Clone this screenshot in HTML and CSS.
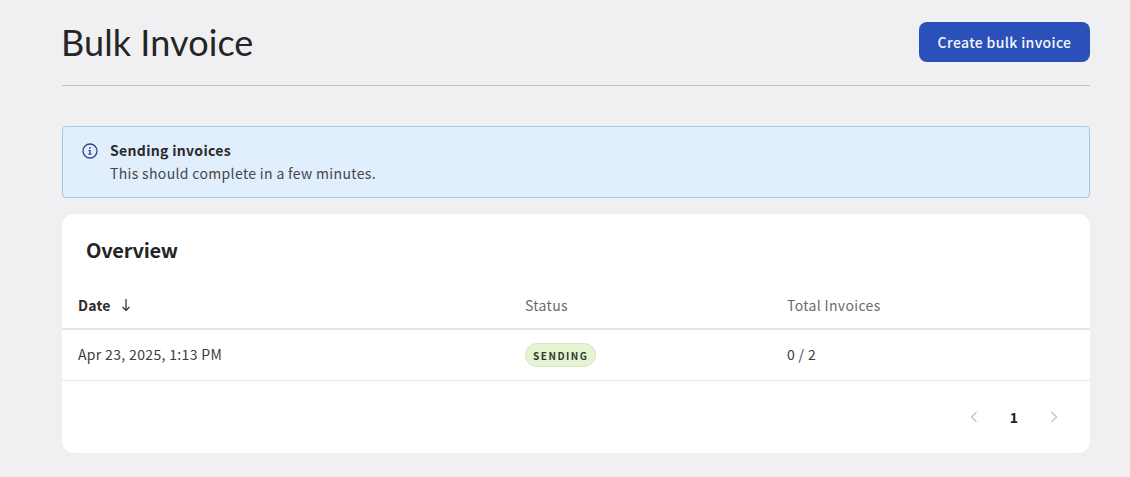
FILE: index.html
```html
<!DOCTYPE html>
<html lang="en">
<head>
<meta charset="utf-8">
<title>Bulk Invoice</title>
<link rel="stylesheet" href="styles.css">
</head>
<body>
<main class="page">
  <header class="page-header">
    <h1 class="page-title">Bulk Invoice</h1>
    <button class="primary-button" type="button">Create bulk invoice</button>
  </header>
  <section class="alert">
    <svg class="alert-icon" viewBox="0 0 16 16" width="16" height="16" aria-hidden="true">
      <circle cx="8" cy="8" r="7" fill="none" stroke="#3b3f8f" stroke-width="1.3"/>
      <rect x="7.35" y="7" width="1.3" height="4.5" fill="#3b3f8f"/>
      <rect x="6.4" y="7" width="1.6" height="1.1" fill="#3b3f8f"/>
      <rect x="6.4" y="10.6" width="3.2" height="1.1" fill="#3b3f8f"/>
      <circle cx="8" cy="4.9" r="0.9" fill="#3b3f8f"/>
    </svg>
    <div class="alert-body">
      <div class="alert-title">Sending invoices</div>
      <div class="alert-text">This should complete in a few minutes.</div>
    </div>
  </section>
  <section class="card">
    <h2 class="card-title">Overview</h2>
    <div class="table-row table-head">
      <div class="cell cell-date cell-sorted">Date
        <svg class="sort-icon" viewBox="0 0 10 14" width="10" height="14" aria-hidden="true">
          <path d="M5 1v11.5M1.5 9L5 12.5 8.5 9" fill="none" stroke="#2e2e2e" stroke-width="1.2"/>
        </svg>
      </div>
      <div class="cell cell-status">Status</div>
      <div class="cell cell-total">Total Invoices</div>
    </div>
    <div class="table-row table-body">
      <div class="cell cell-date">Apr 23, 2025, 1:13 PM</div>
      <div class="cell cell-status"><span class="badge">SENDING</span></div>
      <div class="cell cell-total">0 / 2</div>
    </div>
    <nav class="pagination">
      <svg class="page-arrow" viewBox="0 0 8 12" width="8" height="12" aria-hidden="true"><path d="M6.5 1L1.5 6l5 5" fill="none" stroke="#c4c4c4" stroke-width="1.4"/></svg>
      <span class="page-current">1</span>
      <svg class="page-arrow" viewBox="0 0 8 12" width="8" height="12" aria-hidden="true"><path d="M1.5 1l5 5-5 5" fill="none" stroke="#c4c4c4" stroke-width="1.4"/></svg>
    </nav>
  </section>
</main>
</body>
</html>
```
FILE: styles.css
```css
* { box-sizing: border-box; }
html, body { margin: 0; height: 100%; }
body {
  background: #f0f0f2;
  color: #2a2a2a;
  font-family: "Noto Sans CJK JP", "Noto Sans", sans-serif;
  font-size: 14px;
  overflow: hidden;
}
.page { padding: 0 40px 0 62px; }
.page-header {
  height: 86px;
  padding-top: 22px;
  display: flex;
  justify-content: space-between;
  align-items: flex-start;
  border-bottom: 1px solid #c0c0c2;
  margin-bottom: 40px;
}
.page-title {
  margin: 0 0 0 -1px;
  font-family: Lato, sans-serif;
  font-weight: 400;
  font-size: 36px;
  line-height: 40px;
  letter-spacing: 0.08px;
  color: #252525;
}
.primary-button {
  width: 171px;
  height: 40px;
  border: 0;
  border-radius: 8px;
  background: #2b50b9;
  color: #f7f8fc;
  font: 500 14px/20px "Noto Sans CJK JP", "Noto Sans", sans-serif;
  letter-spacing: 0.35px;
}
.alert {
  height: 72px;
  display: flex;
  gap: 12px;
  padding: 14px 19px 0;
  background: #e1eefb;
  border: 1px solid #a3c5ef;
  border-radius: 4px;
  margin-bottom: 16px;
}
.alert-icon { margin-top: 2px; flex: none; }
.alert-title { font-weight: 700; line-height: 18px; letter-spacing: 0.32px; }
.alert-text { line-height: 28px; color: #44474c; letter-spacing: 0.34px; }
.card {
  height: 239px;
  background: #fff;
  border-radius: 12px;
}
.card-title {
  margin: 0;
  padding: 22px 24px 0;
  height: 67px;
  font-size: 20px;
  line-height: 28px;
  font-weight: 700;
  letter-spacing: -0.25px;
  color: #252525;
}
.table-row { display: grid; grid-template-columns: 463px 262px 1fr; align-items: center; }
.cell { letter-spacing: 0.34px; }
.cell-date { display: flex; align-items: center; gap: 10px; padding-left: 16px; }
.table-head {
  height: 49px;
  border-bottom: 2px solid #e4e4e4;
  color: #6b6b6b;
}
.cell-sorted { color: #2e2e2e; font-weight: 600; letter-spacing: 0.2px; }
.table-body {
  height: 51px;
  border-bottom: 1px solid #e6e6e6;
  color: #3d3d3d;
}
.table-body .cell-date, .table-body .cell-total { padding-bottom: 2px; }
.badge {
  display: inline-flex;
  align-items: center;
  height: 24px;
  padding: 0 7px;
  border: 1px solid #d4e7bf;
  border-radius: 12px;
  background: #e5f5d4;
  color: #2e3a2a;
  font-size: 10px;
  font-weight: 600;
  letter-spacing: 1.5px;
}
.pagination {
  height: 72px;
  display: flex;
  justify-content: flex-end;
  align-items: center;
  gap: 32px;
  padding-right: 32px;
}
.page-current { font-weight: 700; color: #222; }
```
